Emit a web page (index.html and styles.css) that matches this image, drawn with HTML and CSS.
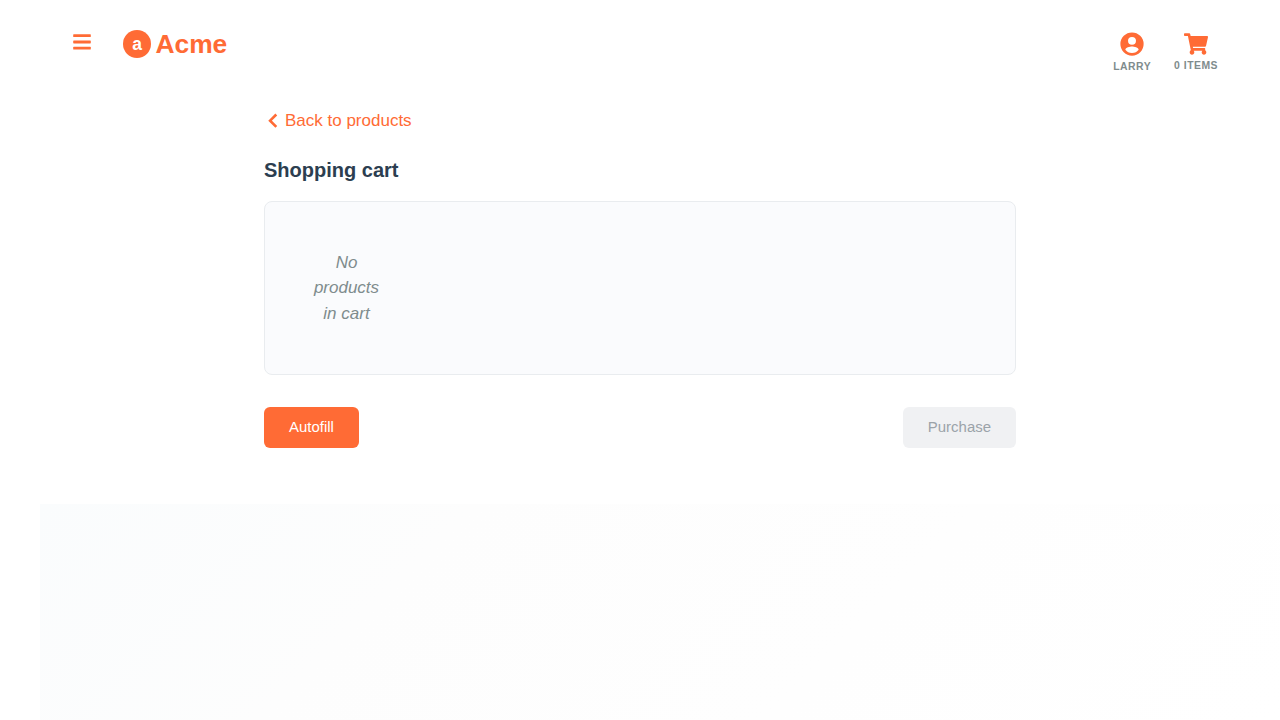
FILE: index.html
```html
<!DOCTYPE html>
<html lang="en">
<head>
<meta charset="utf-8">
<title>Acme</title>
<link rel="stylesheet" href="styles.css">
</head>
<body>
<header class="header">
  <div class="header-left">
    <button class="menu" aria-label="Menu"><svg class="icon-menu" viewBox="0 0 18 18"><g fill="currentColor"><rect x="0.2" y="1.2" width="17.6" height="2.9" rx="0.6"/><rect x="0.2" y="7.5" width="17.6" height="2.9" rx="0.6"/><rect x="0.2" y="13.7" width="17.6" height="2.9" rx="0.6"/></g></svg></button>
    <a class="brand"><span class="brand-mark">a</span><span class="brand-name">Acme</span></a>
  </div>
  <nav class="header-right">
    <a class="nav-item nav-user">
      <svg class="icon-user" viewBox="0 0 496 512"><path fill="currentColor" fill-rule="evenodd" d="M248 8a248 248 0 1 0 0 496a248 248 0 0 0 0-496zM248 104a85 85 0 1 1 0 170a85 85 0 0 1 0-170zM248 448c-60 0-112-27-142-70c1-44 96-68 142-68s141 24 142 68c-30 43-82 70-142 70z"/></svg>
      <span class="nav-label">LARRY</span>
    </a>
    <a class="nav-item nav-cart">
      <svg class="icon-cart" viewBox="0 0 576 512"><path fill="currentColor" d="M528.12 301.319l47.273-208C578.806 78.301 567.391 64 551.99 64H159.208l-9.166-44.81C147.758 8.021 137.93 0 126.529 0H24C10.745 0 0 10.745 0 24v16c0 13.255 10.745 24 24 24h69.883l70.248 343.435C147.325 417.1 136 435.222 136 456c0 30.928 25.072 56 56 56s56-25.072 56-56c0-15.674-6.447-29.835-16.824-40h209.647C430.447 426.165 424 440.326 424 456c0 30.928 25.072 56 56 56s56-25.072 56-56c0-22.172-12.888-41.332-31.579-50.405l5.517-24.276c3.413-15.018-8.002-29.319-23.403-29.319H218.117l-6.545-32h293.145c11.206 0 20.92-7.754 23.403-18.681z"/></svg>
      <span class="nav-label">0 ITEMS</span>
    </a>
  </nav>
</header>
<main class="content">
  <a class="back"><svg class="icon-back" viewBox="0 0 10 16"><path d="M8.3 1.5L2.1 7.7l6.2 6.2" fill="none" stroke="currentColor" stroke-width="2.6"/></svg>Back to products</a>
  <h1 class="title">Shopping cart</h1>
  <section class="cart"><p class="empty">No products in cart</p></section>
  <div class="actions">
    <button class="button">Autofill</button>
    <button class="button button-disabled" disabled>Purchase</button>
  </div>
</main>
<div class="backdrop"></div>
</body>
</html>
```
FILE: styles.css
```css
* { box-sizing: border-box; }
body {
  margin: 0;
  height: 720px;
  overflow: hidden;
  display: flex;
  flex-direction: column;
  background: #fff;
  color: #2c3e50;
  font: 17px/1.5 "Liberation Sans", Arial, sans-serif;
}
.header {
  height: 110px;
  padding: 30px 62px 0 73px;
  display: flex;
  justify-content: space-between;
  color: #ff6b35;
}
.header-left { display: flex; align-items: flex-start; gap: 32px; }
.menu {
  width: 18px;
  margin: 0;
  padding: 3px 0 0;
  border: 0;
  background: none;
  color: #ff6b35;
  display: flex;
}
.icon-menu { width: 18px; height: 18px; }
.brand { display: flex; align-items: center; gap: 4.4px; }
.brand-mark {
  width: 28px;
  height: 28px;
  border-radius: 50%;
  background: #ff6b35;
  color: #fff;
  font-size: 17.5px;
  font-weight: bold;
  line-height: 28px;
  text-align: center;
}
.brand-name { font-size: 26.4px; font-weight: bold; line-height: 28px; }
.header-right { display: flex; align-items: flex-start; gap: 23px; }
.nav-item { display: flex; flex-direction: column; align-items: center; }
.nav-user { padding-top: 2px; }
.nav-cart { padding-top: 3px; }
.icon-user { width: 24px; height: 24px; }
.icon-cart { width: 24px; height: 22px; }
.nav-label {
  margin-top: 5px;
  color: #7f8c8d;
  font-size: 10.4px;
  font-weight: bold;
  line-height: 12px;
  letter-spacing: 0.5px;
}
.content { width: 752px; height: 394px; margin: 0 auto; }
.back {
  height: 22px;
  padding-left: 4px;
  display: flex;
  align-items: center;
  gap: 7px;
  color: #ff6b35;
}
.icon-back { width: 10px; height: 16px; }
.title { margin: 23px 0 16px; font-size: 20px; line-height: 30px; }
.cart {
  height: 174px;
  padding: 47.7px 48px;
  border: 1px solid #e9ecef;
  border-radius: 8px;
  background: #fafbfd;
}
.empty {
  width: 67px;
  margin: 0;
  color: #7f8c8d;
  font-style: italic;
  text-align: center;
}
.actions { margin-top: 32px; display: flex; justify-content: space-between; }
.button {
  height: 41px;
  padding: 0 25px 2px;
  border: 0;
  border-radius: 6px;
  background: #ff6b35;
  color: #fff;
  font: 14.96px/22px "Liberation Sans", Arial, sans-serif;
}
.button-disabled { background: #f0f1f3; color: #9ba3a9; }
.backdrop {
  flex: 1;
  margin-left: 40px;
  background: linear-gradient(135deg, #fafcfd, #fdfdfd 30%, #fff);
}
```
